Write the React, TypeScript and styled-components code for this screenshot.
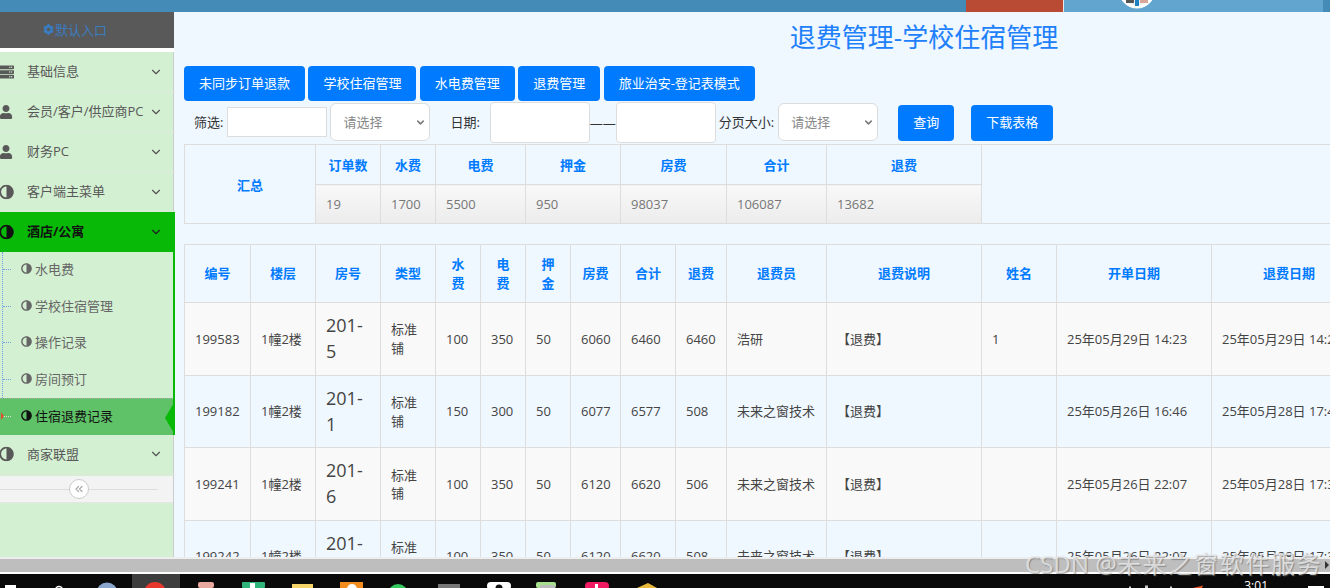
import React from "react";
import styled, { createGlobalStyle } from "styled-components";
import { ChevronDown, ChevronsLeft } from "lucide-react";
import { FaAdjust, FaCog, FaServer, FaUser } from "react-icons/fa";

const Global = createGlobalStyle`
  html, body { margin: 0; padding: 0; height: 100%; overflow: hidden; background: #fff; }
  * { box-sizing: border-box; }
  body { font-family: "Open Sans", "Noto Sans CJK SC", sans-serif; font-size: 13px; color: #333; }
`;

const Page = styled.div`
  width: 1330px; height: 588px; display: flex; flex-direction: column; overflow: hidden; position: relative;
`;
const TopBar = styled.header`
  height: 12px; flex: none; background: #448cb7; display: flex; padding-left: 966px; overflow: hidden;
`;
const AlertBlock = styled.div`width: 98px; background: #b94a33; border-right: 1px solid #e8e8e8; flex: none;`;
const UserBlock = styled.div`
  width: 259px; flex: none; background: #62a6d0; display: flex; align-items: flex-end; padding-left: 54px; gap: 17px; position: relative;
`;
const Avatar = styled.svg`flex: none; width: 38px; height: 38px; margin-bottom: 3px;`;
const UserName = styled.span`
  color: #fff; font-size: 12px; line-height: 16px; white-space: nowrap; margin-bottom: 10px;
`;
const Middle = styled.div`flex: 1; min-height: 0; display: flex; overflow: hidden;`;
const Sidebar = styled.aside`
  width: 174px; flex: none; background: #d4f0d2; border-right: 1px solid #ccc; position: relative; z-index: 2;
`;
const EntryHeader = styled.div`
  height: 40px; background: #595959; border-bottom: 3px solid #fff; box-shadow: inset 0 -1px 0 #fff;
  display: flex; align-items: center; justify-content: center; gap: 1px; padding: 0 24px 2px 0;
  color: #3a7cc0; font-size: 13px; margin-right: -1px;
`;
const NavItem = styled.div<{ $active?: boolean }>`
  height: 40px; width: 175px; display: flex; align-items: center;
  padding: 0 0 2px 27px; position: relative; font-size: 13px;
  border-bottom: 1px solid ${(p) => (p.$active ? "#08b908" : "#dfe8dd")};
  background: ${(p) => (p.$active ? "#08b908" : "transparent")};
  color: ${(p) => (p.$active ? "#111" : "#585858")};
  font-weight: ${(p) => (p.$active ? 700 : 400)};
  span { white-space: nowrap; }
`;
const NavIcon = styled.span`
  position: absolute; left: -1px; top: 50%; transform: translateY(-50%); display: flex; font-size: 15px;
`;
const NavArrow = styled(ChevronDown)<{ $dark?: boolean }>`
  position: absolute; left: 149px; top: 50%; transform: translateY(-50%); color: ${(p) => (p.$dark ? "#222" : "#555")};
`;
const HalfIcon = styled(FaAdjust)`transform: scaleX(-1); flex: none;`;
const SubMenu = styled.div`
  width: 175px; border-right: 2px solid #08b908; position: relative;
  &::before {
    content: ""; position: absolute; left: 2px; top: 0; bottom: 37px; border-left: 1px dotted #6f9fe0;
  }
`;
const SubItem = styled.div<{ $active?: boolean }>`
  height: 36.5px; display: flex; align-items: center; gap: 3px; padding: 0 0 3px 21px; position: relative;
  color: ${(p) => (p.$active ? "#111" : "#666")};
  background: ${(p) => (p.$active ? "#5fc168" : "transparent")};
  border-top: ${(p) => (p.$active ? "1px dotted #aaa" : "none")};
  font-size: 13px; white-space: nowrap;
  &::before {
    content: ""; position: absolute; left: 3px; top: 47%; width: 8px; border-top: 1px dotted ${(p) => (p.$active ? "#ddd" : "#6f9fe0")};
  }
`;
const ActiveTip = styled.i`
  position: absolute; right: -2px; top: 2px; width: 0; height: 0;
  border-top: 17px solid transparent; border-bottom: 17px solid transparent; border-right: 10px solid #08b908;
`;
const RedTip = styled.i`
  position: absolute; left: 1px; top: 13px; width: 0; height: 0;
  border-top: 4px solid transparent; border-bottom: 4px solid transparent; border-left: 3px solid #d9542b;
`;
const CollapseBar = styled.div`
  height: 27px; background: #f3f3f3; border-bottom: 1px solid #e5e5e5; position: relative; margin-top: 1px;
  &::before { content: ""; position: absolute; left: 0; width: 158px; top: 13px; border-top: 1px solid #ddd; }
`;
const CollapseKnob = styled.div`
  position: absolute; left: 69px; top: 3px; width: 20px; height: 20px; border-radius: 50%;
  background: #fff; border: 1px solid #ccc; color: #aaa; display: flex; align-items: center; justify-content: center;
`;
const Main = styled.main`flex: 1; min-width: 0; background: #eff7ff; overflow: hidden;`;
const Content = styled.div`width: 1500px; padding-left: 10px;`;
const Title = styled.h1`
  margin: 0 0 4px -10px; height: 50px; line-height: 50px; font-size: 26px; font-weight: 400; color: #2080fb; text-align: center;
`;
const Toolbar = styled.div`display: flex; gap: 3.4px; height: 35px;`;
const PrimaryButton = styled.button`
  border: 0; background: #007bff; color: #fff; font: inherit; font-size: 13px; border-radius: 4px; padding: 0 15px 3px; height: 35px; white-space: nowrap; flex: none;
`;
const FilterRow = styled.div`display: flex; align-items: center; height: 43px; padding-left: 10px;`;
const FieldLabel = styled.label<{ $ml?: number; $mr?: number }>`
  white-space: nowrap; color: #333; font-size: 13px; padding-bottom: 2px; margin-left: ${(p) => p.$ml ?? 0}px; margin-right: ${(p) => p.$mr ?? 0}px;
`;
const TextField = styled.input`
  width: 100px; height: 30px; border: 1px solid #ddd; background: #fff; padding: 0; flex: none; margin-top: -1px;
`;
const SelectWrap = styled.div<{ $ml?: number }>`
  position: relative; width: 100px; height: 38px; flex: none; margin-left: ${(p) => p.$ml ?? 0}px; margin-top: -1px;
`;
const Select = styled.select`
  appearance: none; width: 100%; height: 100%; border: 1px solid #ddd; border-radius: 6px; background: #fff;
  color: #888; font: inherit; font-size: 13px; padding-left: 12px;
`;
const SelectArrow = styled(ChevronDown)`
  position: absolute; right: 4px; top: 14px; color: #777; pointer-events: none;
`;
const DateField = styled.input`
  width: 100px; height: 41px; border: 1px solid #ddd; border-radius: 4px; background: #fff; padding: 0; flex: none;
`;
const Dash = styled.span`width: 26px; text-align: center; color: #333; flex: none; letter-spacing: 0; white-space: nowrap; font-size: 13px;`;
const QueryButton = styled(PrimaryButton)<{ $ml: number }>`
  height: 36px; margin-left: ${(p) => p.$ml}px;
`;
const SummaryTable = styled.table`
  border-collapse: collapse; table-layout: fixed; width: 1490px; font-size: 13px; margin-bottom: 20px;
  th, td { border: 1px solid #ddd; padding: 0 10px; text-align: left; }
  th { color: #007bff; text-align: center; font-weight: 700; height: 40px; }
  td { height: 39px; color: #777; background: linear-gradient(#f8f8f8, #ececec); }
  td.blank { background: none; }
`;
const DataTable = styled.table`
  border-collapse: collapse; table-layout: fixed; width: 1182px; font-size: 13px; line-height: 1.42857;
  th, td { border: 1px solid #ddd; padding: 10px; vertical-align: middle; text-align: left; }
  th { color: #007bff; text-align: center; font-weight: 700; }
  td { color: #444; height: 72.6px; }
  tbody tr:nth-child(odd) td { background: #f9f9f9; }
`;
const RoomCell = styled.td`font-size: 18px;`;
const Scrollbar = styled.div`
  height: 17px; flex: none; background: #bebebe; border-top: 2px solid #eee; border-bottom: 2px solid #fff; position: relative;
`;
const ScrollArrow = styled.i`
  position: absolute; right: 1px; top: 2px; width: 0; height: 0;
  border-top: 4px solid transparent; border-bottom: 4px solid transparent; border-left: 4px solid #333;
`;
const Taskbar = styled.footer`
  height: 14px; flex: none; background: #0a0a0a; position: relative; overflow: hidden; display: flex; justify-content: flex-end; padding-right: 62px;
`;
const TaskIcons = styled.svg`position: absolute; left: 0; top: 0;`;
const Clock = styled.span`color: #fff; font-size: 12px; line-height: 14px; padding-top: 5px; position: relative;`;
const Watermark = styled.div`
  position: absolute; left: 1025px; top: 548px; font-size: 24px; line-height: 32px; white-space: nowrap; color: rgba(232,232,232,.82);
  text-shadow: 1px 1px 1px rgba(95,95,95,.55); font-family: "Noto Sans", "Noto Sans CJK SC", sans-serif; pointer-events: none;
  span { letter-spacing: 1.7px; }
`;

const navTop = [
  { label: "基础信息", icon: <FaServer /> },
  { label: "会员/客户/供应商PC", icon: <FaUser size={14} /> },
  { label: "财务PC", icon: <FaUser size={14} /> },
  { label: "客户端主菜单", icon: <HalfIcon /> },
];
const subs = ["水电费", "学校住宿管理", "操作记录", "房间预订"];
const buttons = ["未同步订单退款", "学校住宿管理", "水电费管理", "退费管理", "旅业治安-登记表模式"];
const sumCols = [131, 65, 55, 90, 95, 106, 100, 155, 693];
const sumHead = ["订单数", "水费", "电费", "押金", "房费", "合计", "退费"];
const sumVals = ["19", "1700", "5500", "950", "98037", "106087", "13682"];
const cols = [66, 65, 65, 55, 45, 45, 45, 50, 55, 51, 100, 155, 75, 155, 155];
const head = ["编号", "楼层", "房号", "类型", "水费", "电费", "押金", "房费", "合计", "退费", "退费员", "退费说明", "姓名", "开单日期", "退费日期"];
const rows = [
  ["199583", "1幢2楼", "201-5", "标准铺", "100", "350", "50", "6060", "6460", "6460", "浩研", "【退费】", "1", "25年05月29日 14:23", "25年05月29日 14:23"],
  ["199182", "1幢2楼", "201-1", "标准铺", "150", "300", "50", "6077", "6577", "508", "未来之窗技术", "【退费】", "", "25年05月26日 16:46", "25年05月28日 17:46"],
  ["199241", "1幢2楼", "201-6", "标准铺", "100", "350", "50", "6120", "6620", "506", "未来之窗技术", "【退费】", "", "25年05月26日 22:07", "25年05月28日 17:32"],
  ["199242", "1幢2楼", "201-7", "标准铺", "100", "350", "50", "6120", "6620", "508", "未来之窗技术", "【退费】", "", "25年05月26日 22:07", "25年05月28日 17:32"],
];

function Choice({ ml }: { ml?: number }) {
  return (
    <SelectWrap $ml={ml}>
      <Select defaultValue="">
        <option value="">请选择</option>
      </Select>
      <SelectArrow size={11} strokeWidth={3.2} />
    </SelectWrap>
  );
}

export default function App() {
  return (
    <Page>
      <Global />
      <TopBar>
        <AlertBlock />
        <UserBlock>
          <Avatar viewBox="0 0 38 38">
            <circle cx="19" cy="19" r="18" fill="#fff" stroke="#fff" />
            <circle cx="19" cy="19" r="15.5" fill="#eef0f0" />
            <rect x="8" y="26" width="8" height="6" fill="#555" />
            <rect x="17" y="26" width="4" height="9" fill="#1c7fc0" />
            <rect x="22" y="26" width="8" height="6" fill="#d9a79a" />
          </Avatar>
          <UserName>未来之窗技术</UserName>
        </UserBlock>
      </TopBar>
      <Middle>
        <Sidebar>
          <EntryHeader>
            <FaCog size={11} />
            默认入口
          </EntryHeader>
          {navTop.map((n) => (
            <NavItem key={n.label}>
              <NavIcon>{n.icon}</NavIcon>
              <span>{n.label}</span>
              <NavArrow size={14} />
            </NavItem>
          ))}
          <NavItem $active>
            <NavIcon><HalfIcon /></NavIcon>
            <span>酒店/公寓</span>
            <NavArrow size={14} $dark />
          </NavItem>
          <SubMenu>
            {subs.map((s) => (
              <SubItem key={s}>
                <HalfIcon size={11} />
                {s}
              </SubItem>
            ))}
            <SubItem $active>
              <RedTip />
              <HalfIcon size={11} />
              住宿退费记录
              <ActiveTip />
            </SubItem>
          </SubMenu>
          <NavItem>
            <NavIcon><HalfIcon /></NavIcon>
            <span>商家联盟</span>
            <NavArrow size={14} />
          </NavItem>
          <CollapseBar>
            <CollapseKnob>
              <ChevronsLeft size={12} strokeWidth={2.4} />
            </CollapseKnob>
          </CollapseBar>
        </Sidebar>
        <Main>
          <Content>
            <Title>退费管理-学校住宿管理</Title>
            <Toolbar>
              {buttons.map((b) => (
                <PrimaryButton key={b}>{b}</PrimaryButton>
              ))}
            </Toolbar>
            <FilterRow>
              <FieldLabel $mr={4}>筛选:</FieldLabel>
              <TextField />
              <Choice ml={3} />
              <FieldLabel $ml={20} $mr={10}>日期:</FieldLabel>
              <DateField />
              <Dash>——</Dash>
              <DateField />
              <FieldLabel $ml={3} $mr={4}>分页大小:</FieldLabel>
              <Choice />
              <QueryButton $ml={20}>查询</QueryButton>
              <QueryButton $ml={17}>下载表格</QueryButton>
            </FilterRow>
            <SummaryTable>
              <colgroup>
                {sumCols.map((w, i) => (
                  <col key={i} width={w} />
                ))}
              </colgroup>
              <tbody>
                <tr>
                  <th rowSpan={2}>汇总</th>
                  {sumHead.map((h) => (
                    <th key={h}>{h}</th>
                  ))}
                  <td className="blank" rowSpan={2} />
                </tr>
                <tr>
                  {sumVals.map((v, i) => (
                    <td key={i}>{v}</td>
                  ))}
                </tr>
              </tbody>
            </SummaryTable>
            <DataTable>
              <colgroup>
                {cols.map((w, i) => (
                  <col key={i} width={w} />
                ))}
              </colgroup>
              <thead>
                <tr>
                  {head.map((h) => (
                    <th key={h}>{h}</th>
                  ))}
                </tr>
              </thead>
              <tbody>
                {rows.map((r) => (
                  <tr key={r[0]}>
                    {r.map((c, i) =>
                      i === 2 ? <RoomCell key={i}>{c}</RoomCell> : <td key={i}>{c}</td>
                    )}
                  </tr>
                ))}
              </tbody>
            </DataTable>
          </Content>
        </Main>
      </Middle>
      <Scrollbar>
        <ScrollArrow />
      </Scrollbar>
      <Taskbar>
        <TaskIcons width="1330" height="14" viewBox="0 0 1330 14">
          <rect x="132" y="0" width="48" height="14" fill="#3d3d3d" />
          <rect x="5" y="11" width="11" height="3" fill="#fff" />
          <circle cx="59" cy="16" r="3.5" fill="none" stroke="#fff" strokeWidth="1.5" />
          <circle cx="107" cy="19" r="10.5" fill="#8aa6cf" />
          <circle cx="155" cy="19" r="11" fill="#e8372c" />
          <rect x="198" y="8" width="16" height="6" rx="2" fill="#e8a8a0" />
          <rect x="242" y="8" width="23" height="6" rx="1" fill="#2fb479" />
          <rect x="250" y="9" width="5" height="5" fill="#fff" />
          <rect x="292" y="10" width="21" height="4" fill="#f5d46a" />
          <rect x="340" y="8" width="23" height="6" fill="#f28c1e" />
          <circle cx="352" cy="15" r="5" fill="#fff" />
          <circle cx="398" cy="20" r="10" fill="#35c85f" />
          <rect x="438" y="10" width="22" height="4" fill="#777" />
          <rect x="487" y="8" width="24" height="8" rx="4" fill="#fff" />
          <circle cx="499" cy="14" r="3.5" fill="#111" />
          <rect x="536" y="8" width="20" height="6" rx="2" fill="#a6e08e" />
          <rect x="540" y="11" width="15" height="3" fill="#bbb" />
          <rect x="585" y="8" width="24" height="8" rx="4" fill="#f01a63" />
          <rect x="595" y="10" width="3" height="4" fill="#fff" />
          <path d="M637 14 L648 9 L657 14 Z" fill="#e8b93a" />
          <rect x="1129" y="12.5" width="2" height="1.5" fill="#ccc" />
          <rect x="1145" y="11.5" width="3" height="2.5" fill="#ccc" />
          <rect x="1170" y="12.5" width="2" height="1.5" fill="#ccc" />
          <path d="M1193 14 L1203 11.5 L1202 14 Z" fill="#e8501c" />
          <rect x="1308" y="12" width="16" height="2" fill="#fff" />
        </TaskIcons>
        <Clock>3:01</Clock>
      </Taskbar>
      <Watermark>CSDN @<span>未来之窗软件服务</span></Watermark>
    </Page>
  );
}
